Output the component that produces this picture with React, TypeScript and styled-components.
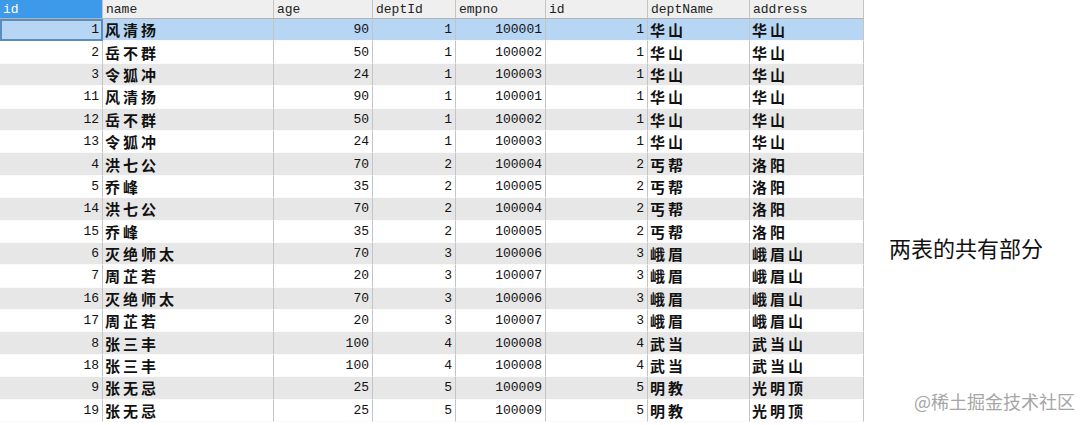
import React from "react";
import styled, { createGlobalStyle } from "styled-components";

const Global = createGlobalStyle`
  html, body { margin: 0; padding: 0; background: #ffffff; }
  body { width: 1090px; height: 425px; overflow: hidden; }
`;

type Row = [number, string, number, number, number, number, string, string];

const rows: Row[] = [
  [1, "风清扬", 90, 1, 100001, 1, "华山", "华山"],
  [2, "岳不群", 50, 1, 100002, 1, "华山", "华山"],
  [3, "令狐冲", 24, 1, 100003, 1, "华山", "华山"],
  [11, "风清扬", 90, 1, 100001, 1, "华山", "华山"],
  [12, "岳不群", 50, 1, 100002, 1, "华山", "华山"],
  [13, "令狐冲", 24, 1, 100003, 1, "华山", "华山"],
  [4, "洪七公", 70, 2, 100004, 2, "丐帮", "洛阳"],
  [5, "乔峰", 35, 2, 100005, 2, "丐帮", "洛阳"],
  [14, "洪七公", 70, 2, 100004, 2, "丐帮", "洛阳"],
  [15, "乔峰", 35, 2, 100005, 2, "丐帮", "洛阳"],
  [6, "灭绝师太", 70, 3, 100006, 3, "峨眉", "峨眉山"],
  [7, "周芷若", 20, 3, 100007, 3, "峨眉", "峨眉山"],
  [16, "灭绝师太", 70, 3, 100006, 3, "峨眉", "峨眉山"],
  [17, "周芷若", 20, 3, 100007, 3, "峨眉", "峨眉山"],
  [8, "张三丰", 100, 4, 100008, 4, "武当", "武当山"],
  [18, "张三丰", 100, 4, 100008, 4, "武当", "武当山"],
  [9, "张无忌", 25, 5, 100009, 5, "明教", "光明顶"],
  [19, "张无忌", 25, 5, 100009, 5, "明教", "光明顶"],
];

const headers = ["id", "name", "age", "deptId", "empno", "id", "deptName", "address"];
const numericCols = [true, false, true, true, true, true, false, false];

const Page = styled.div`
  display: flex;
  align-items: flex-start;
  width: 1090px;
  height: 425px;
  position: relative;
`;

const Grid = styled.div`
  display: grid;
  grid-template-columns: 103px 171px 99px 83px 90px 102px 102px 114px;
  grid-template-rows: 19px;
  grid-auto-rows: 22.4px;
  width: 864px;
  flex: none;
`;

const HeaderCell = styled.div<{ $active?: boolean }>`
  box-sizing: border-box;
  padding: 0 3px;
  display: flex;
  align-items: center;
  font-family: "Liberation Mono", "DejaVu Sans Mono", monospace;
  font-size: 13px;
  color: ${(p) => (p.$active ? "#ffffff" : "#222222")};
  background: ${(p) => (p.$active ? "#3d99ea" : "#efefef")};
  border-right: 1px solid #c4c4c4;
  border-bottom: 1px solid #b4b4b4;
`;

const Cell = styled.div<{ $num?: boolean; $bg: string; $focus?: boolean }>`
  box-sizing: border-box;
  display: flex;
  align-items: center;
  justify-content: ${(p) => (p.$num ? "flex-end" : "flex-start")};
  padding: ${(p) => (p.$num ? "0 3px 0 2px" : "0 2px")};
  background: ${(p) => p.$bg};
  border-right: 1px solid #c4c4c4;
  border-bottom: 1px solid #fafafa;
  color: #111111;
  font-family: ${(p) =>
    p.$num
      ? `"Liberation Mono", "DejaVu Sans Mono", monospace`
      : `"Noto Sans CJK SC", "Noto Sans", sans-serif`};
  font-size: ${(p) => (p.$num ? "13px" : "15px")};
  font-weight: ${(p) => (p.$num ? 400 : 700)};
  letter-spacing: ${(p) => (p.$num ? "0" : "3px")};
  outline: ${(p) => (p.$focus ? "2px solid #5a8cc0" : "none")};
  outline-offset: -2px;
  white-space: nowrap;
  overflow: hidden;
`;

const Side = styled.div`
  flex: 1;
  height: 425px;
  display: flex;
  align-items: center;
  padding-left: 25px;
  padding-top: 68px;
  box-sizing: border-box;
`;

const Caption = styled.div`
  font-family: "Noto Sans CJK SC", "Noto Sans", sans-serif;
  font-size: 22px;
  color: #111111;
`;

const Watermark = styled.div`
  position: absolute;
  right: 15px;
  bottom: 11px;
  font-family: "Noto Sans CJK SC", "Noto Sans", sans-serif;
  font-size: 18px;
  color: #a6a6a6;
`;

const rowBg = (i: number) => {
  if (i === 0) return "#b7d6f4";
  return i % 2 === 0 ? "#e7e7e7" : "#ffffff";
};

export default function App() {
  return (
    <>
      <Global />
      <Page>
        <Grid>
          {headers.map((h, i) => (
            <HeaderCell key={"h" + i} $active={i === 0}>
              {h}
            </HeaderCell>
          ))}
          {rows.map((r, ri) =>
            r.map((v, ci) => (
              <Cell
                key={ri + "-" + ci}
                $num={numericCols[ci]}
                $bg={rowBg(ri)}
                $focus={ri === 0 && ci === 0}
              >
                {v}
              </Cell>
            ))
          )}
        </Grid>
        <Side>
          <Caption>两表的共有部分</Caption>
        </Side>
        <Watermark>@稀土掘金技术社区</Watermark>
      </Page>
    </>
  );
}
